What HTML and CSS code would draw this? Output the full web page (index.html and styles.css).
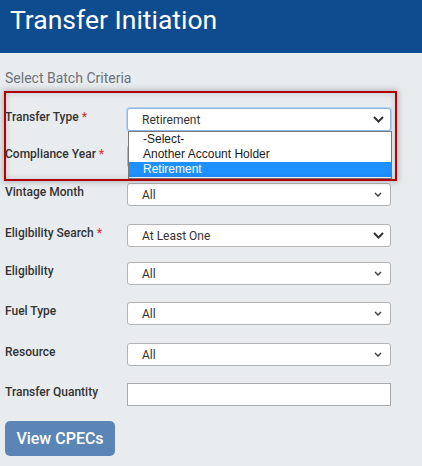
FILE: index.html
```html
<!DOCTYPE html>
<html lang="en">
<head>
<meta charset="utf-8">
<title>Transfer Initiation</title>
<link rel="stylesheet" href="styles.css">
</head>
<body>
<header class="topbar">
  <h1 class="page-title">Transfer Initiation</h1>
</header>
<main class="content">
  <h2 class="section-title">Select Batch Criteria</h2>
  <form class="criteria">
    <div class="row gap-14">
      <label class="field-label">Transfer Type <span class="req">*</span></label>
      <div class="select-wrap">
        <div class="select is-focused">
          <span class="select-value">Retirement</span>
          <svg class="chev chev-lg" width="11" height="7" viewBox="0 0 11 7"><path d="M1 1 L5.5 5.5 L10 1" fill="none" stroke="#333" stroke-width="2"/></svg>
        </div>
        <ul class="dropdown">
          <li class="option">-Select-</li>
          <li class="option">Another Account Holder</li>
          <li class="option is-selected">Retirement</li>
        </ul>
      </div>
    </div>
    <div class="row gap-15">
      <label class="field-label">Compliance Year <span class="req">*</span></label>
      <div class="select">
        <span class="select-value">All</span>
        <svg class="chev chev-sm" width="8" height="5" viewBox="0 0 8 5"><path d="M1 1 L4 4 L7 1" fill="none" stroke="#444" stroke-width="1.5"/></svg>
      </div>
    </div>
    <div class="row gap-18">
      <label class="field-label">Vintage Month</label>
      <div class="select">
        <span class="select-value">All</span>
        <svg class="chev chev-sm" width="8" height="5" viewBox="0 0 8 5"><path d="M1 1 L4 4 L7 1" fill="none" stroke="#444" stroke-width="1.5"/></svg>
      </div>
    </div>
    <div class="row gap-15">
      <label class="field-label">Eligibility Search <span class="req">*</span></label>
      <div class="select">
        <span class="select-value">At Least One</span>
        <svg class="chev chev-lg" width="11" height="7" viewBox="0 0 11 7"><path d="M1 1 L5.5 5.5 L10 1" fill="none" stroke="#333" stroke-width="2"/></svg>
      </div>
    </div>
    <div class="row gap-17">
      <label class="field-label">Eligibility</label>
      <div class="select">
        <span class="select-value">All</span>
        <svg class="chev chev-sm" width="8" height="5" viewBox="0 0 8 5"><path d="M1 1 L4 4 L7 1" fill="none" stroke="#444" stroke-width="1.5"/></svg>
      </div>
    </div>
    <div class="row gap-18">
      <label class="field-label">Fuel Type</label>
      <div class="select">
        <span class="select-value">All</span>
        <svg class="chev chev-sm" width="8" height="5" viewBox="0 0 8 5"><path d="M1 1 L4 4 L7 1" fill="none" stroke="#444" stroke-width="1.5"/></svg>
      </div>
    </div>
    <div class="row gap-17">
      <label class="field-label">Resource</label>
      <div class="select">
        <span class="select-value">All</span>
        <svg class="chev chev-sm" width="8" height="5" viewBox="0 0 8 5"><path d="M1 1 L4 4 L7 1" fill="none" stroke="#444" stroke-width="1.5"/></svg>
      </div>
    </div>
    <div class="row gap-15">
      <label class="field-label">Transfer Quantity</label>
      <input class="text-input" type="text">
    </div>
    <button type="button" class="btn-primary">View CPECs</button>
  </form>
  <div class="highlight"></div>
</main>
</body>
</html>
```
FILE: styles.css
```css
* { box-sizing: border-box; }
html, body { margin: 0; padding: 0; }
body {
  background: #e9ecef;
  font-family: Roboto, "Liberation Sans", Arial, sans-serif;
  color: #333;
  width: 422px;
  height: 466px;
  overflow: hidden;
}
.topbar {
  background: #0f4c8f;
  height: 53px;
  padding: 6px 0 0 10px;
}
.page-title {
  margin: 0;
  font-size: 26.5px;
  font-weight: 400;
  line-height: 28px;
  color: #fff;
}
.content {
  position: relative;
  padding-top: 17px;
}
.section-title {
  margin: 0 0 22px 5px;
  font-size: 14px;
  line-height: 16px;
  font-weight: 400;
  color: #6c7278;
}
.criteria {
  padding-left: 5px;
}
.row {
  display: flex;
  align-items: flex-start;
}
.gap-14 { margin-bottom: 14px; }
.gap-15 { margin-bottom: 15px; }
.gap-17 { margin-bottom: 17px; }
.gap-18 { margin-bottom: 18px; }
.field-label {
  width: 122px;
  flex: none;
  padding-top: 2px;
  font-size: 12px;
  line-height: 14px;
  font-weight: 500;
  color: #333;
}
.req { color: #d9363e; }
.select-wrap {
  position: relative;
  width: 264px;
}
.select {
  width: 264px;
  height: 23px;
  background: #fff;
  border: 1px solid #b3b3b3;
  border-radius: 3px;
  display: flex;
  align-items: center;
  padding-left: 14px;
}
.select.is-focused {
  border-color: #8fb8e6;
  box-shadow: 0 0 0 1px rgba(140, 185, 235, 0.55);
}
.select-value {
  flex: 1 1 auto;
  min-width: 0;
  text-align: left;
  font-size: 12px;
  line-height: 14px;
  color: #333;
}
.chev { flex: none; }
.chev-lg { margin-right: 6px; }
.chev-sm { margin-right: 8px; }
.dropdown {
  position: absolute;
  top: 23px;
  left: 1px;
  width: 264px;
  margin: 0;
  padding: 0 0 1px;
  list-style: none;
  background: #fff;
  border: 1px solid #7a7a7a;
  z-index: 2;
}
.option {
  height: 15px;
  line-height: 15px;
  padding-left: 14px;
  font-family: "Liberation Sans", Arial, sans-serif;
  font-size: 12px;
  color: #1a1a1a;
}
.option.is-selected {
  background: #1e90ff;
  color: #fff;
}
.text-input {
  width: 264px;
  height: 23px;
  margin: 0;
  border: 1px solid #aaa;
  border-radius: 0;
  background: #fff;
  padding: 0 6px;
  font: 12px Roboto, sans-serif;
}
.btn-primary {
  display: block;
  width: 110px;
  height: 35px;
  padding: 0;
  margin: 0;
  border: none;
  border-radius: 5px;
  background: #5b85b5;
  color: #fff;
  font-family: Roboto, sans-serif;
  font-size: 16px;
  font-weight: 500;
}
.highlight {
  position: absolute;
  left: 4px;
  top: 38px;
  width: 393px;
  height: 90px;
  border: 2px solid #b40000;
  box-shadow: 0 0 6px 1px rgba(0, 0, 0, 0.25), inset 0 0 6px rgba(0, 0, 0, 0.18);
  pointer-events: none;
  z-index: 3;
}
```
